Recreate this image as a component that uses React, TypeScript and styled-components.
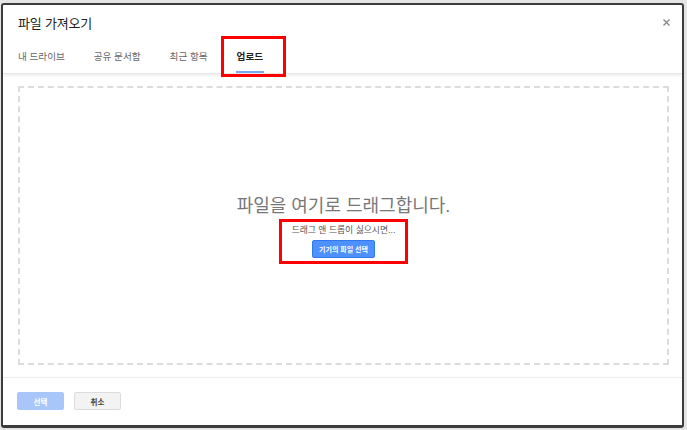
import styled, { createGlobalStyle } from "styled-components"

const GlobalStyle = createGlobalStyle`
  html, body {
    margin: 0;
    padding: 0;
    background: #e4e4e4;
  }
  body {
    font-family: "Liberation Sans", "Noto Sans CJK KR", sans-serif;
  }
`

const tabs = ["내 드라이브", "공유 문서함", "최근 항목", "업로드"]

export default function App() {
  return (
    <>
      <GlobalStyle />
      <Page>
        <Dialog>
          <Header>
            <TitleRow>
              <Title>파일 가져오기</Title>
              <CloseButton aria-label="닫기">
                <svg width="7" height="7" viewBox="0 0 7 7">
                  <path d="M0.5 0.5 L6.5 6.5 M6.5 0.5 L0.5 6.5" stroke="#8a8a8a" strokeWidth="1.4" />
                </svg>
              </CloseButton>
            </TitleRow>
            <TabList>
              {tabs.map((t, i) => (
                <Tab key={t} $active={i === tabs.length - 1}>{t}</Tab>
              ))}
            </TabList>
          </Header>

          <Body>
            <DropZone>
              <DropTitle>파일을 여기로 드래그합니다.</DropTitle>
              <Picker>
                <PickerHint>드래그 앤 드롭이 싫으시면...</PickerHint>
                <PickButton>기기의 파일 선택</PickButton>
              </Picker>
            </DropZone>
          </Body>

          <Footer>
            <FooterButton $primary disabled>선택</FooterButton>
            <FooterButton>취소</FooterButton>
          </Footer>
        </Dialog>
      </Page>
    </>
  )
}

const Page = styled.div`
  width: 687px;
  height: 430px;
  box-sizing: border-box;
  padding: 3px 3px 2px 1px;
  display: flex;
`

const Dialog = styled.div`
  flex: 1;
  box-sizing: border-box;
  background: #ffffff;
  border: 2px solid #3c3c3c;
  border-bottom-width: 3px;
  border-radius: 3px;
  display: flex;
  flex-direction: column;
  overflow: hidden;
`

const Header = styled.div`
  border-bottom: 1px solid #e6e6e6;
  box-shadow: 0 2px 3px rgba(0, 0, 0, 0.07);
  position: relative;
  z-index: 1;
`

const TitleRow = styled.div`
  height: 35px;
  padding: 0 10px 0 15px;
  display: flex;
  align-items: center;
  justify-content: space-between;
`

const Title = styled.h1`
  margin: 0;
  font-size: 13px;
  font-weight: normal;
  color: #222;
  letter-spacing: -0.2px;
`

const CloseButton = styled.button`
  border: none;
  background: none;
  padding: 2px;
  display: flex;
  cursor: pointer;
`

const TabList = styled.div`
  height: 33px;
  padding-left: 14px;
  display: flex;
  gap: 27px;
`

const Tab = styled.div<{ $active?: boolean }>`
  position: relative;
  box-sizing: border-box;
  height: 33px;
  padding: 0 1px;
  display: flex;
  align-items: center;
  font-size: 9.6px;
  color: ${p => (p.$active ? "#222" : "#666")};
  font-weight: ${p => (p.$active ? "bold" : "normal")};
  border-bottom: 2px solid ${p => (p.$active ? "#7aa7f0" : "transparent")};

  ${p => p.$active && `
    &::before {
      content: "";
      position: absolute;
      top: -4px;
      bottom: -6px;
      left: -15px;
      right: -22px;
      border: 3px solid #ff0000;
    }
  `}
`

const Body = styled.div`
  flex: 1;
  display: flex;
  padding: 12px 13px 12px 15px;
`

const DropZone = styled.div`
  flex: 1;
  border: 2px dashed #dcdcdc;
  display: flex;
  flex-direction: column;
  align-items: center;
  justify-content: center;
  padding-top: 7px;
`

const DropTitle = styled.div`
  font-size: 18px;
  line-height: 22px;
  color: #777;
  margin-bottom: 2px;
`

const Picker = styled.div`
  border: 3px solid #ff0000;
  padding: 2px 10px 3px;
  display: flex;
  flex-direction: column;
  align-items: center;
  gap: 3px;
`

const PickerHint = styled.div`
  font-size: 8.8px;
  line-height: 13px;
  color: #555;
`

const PickButton = styled.button`
  height: 18px;
  padding: 0 6px;
  background: #4d90fe;
  border: 1px solid #3079ed;
  border-radius: 2px;
  color: #fff;
  font-family: inherit;
  font-size: 7px;
  font-weight: bold;
  cursor: pointer;
`

const Footer = styled.div`
  height: 48px;
  box-sizing: border-box;
  border-top: 1px solid #ececec;
  padding: 14px 14px 0;
  display: flex;
  gap: 10px;
  align-items: flex-start;
`

const FooterButton = styled.button<{ $primary?: boolean }>`
  width: 47px;
  height: 18px;
  border-radius: 2px;
  font-family: inherit;
  font-size: 7.5px;
  font-weight: bold;
  background: ${p => (p.$primary ? "#a8c6fa" : "#f3f3f3")};
  border: 1px solid ${p => (p.$primary ? "#a8c6fa" : "#dcdcdc")};
  color: ${p => (p.$primary ? "#fff" : "#444")};
`
